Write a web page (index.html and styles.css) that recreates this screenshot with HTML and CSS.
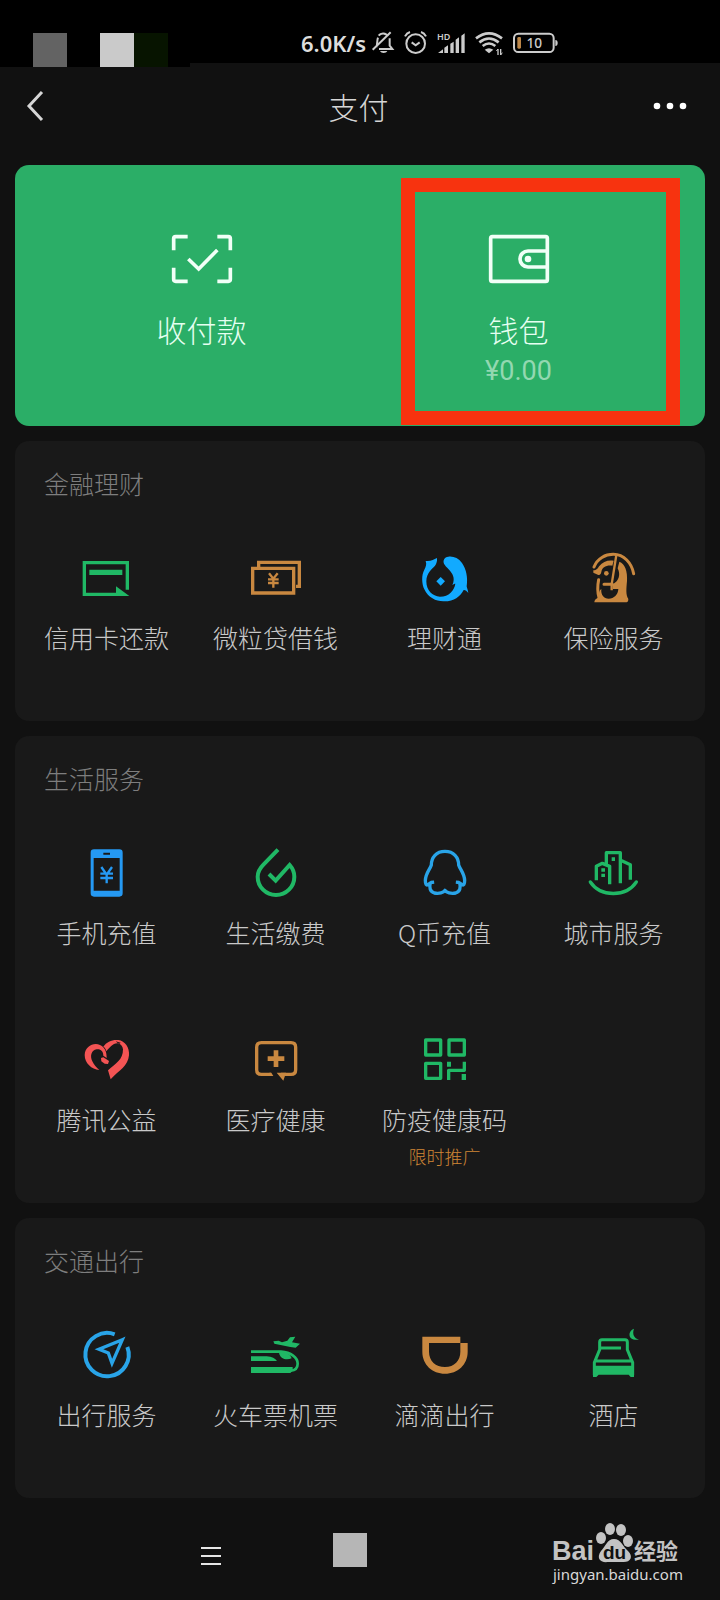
FILE: index.html
```html
<!DOCTYPE html>
<html lang="zh-CN">
<head>
<meta charset="utf-8">
<meta name="viewport" content="width=device-width, initial-scale=1">
<title>支付</title>
<link rel="stylesheet" href="styles.css">
</head>
<body>
<div class="status">
  <div class="mosaic"><i class="tile tile-gray"></i><i class="tile tile-light"></i><i class="tile tile-dark"></i></div>
  <span class="speed">6.0K/s</span>
  <div class="status-icons">
    <svg width="22" height="24" viewBox="0 0 66 72" fill="none" stroke="#ccc" stroke-width="6"><path d="M20 14C26 5 42 5 48 16M53 22V44L61 54H21M13 48C17 40 14 30 18 20M2 56L56 4"/><path d="M24 60H46C43 68 27 68 24 60Z" fill="#ccc" stroke="none"/></svg>
    <svg width="23" height="24" viewBox="0 0 69 72" fill="none" stroke="#ccc" stroke-width="6"><circle cx="35" cy="38" r="28"/><path d="M23 34L35 43L47 34M3 16Q8 6 18 3M51 3Q61 6 66 16"/></svg>
    <svg width="28" height="24" viewBox="0 0 84 72" fill="#ccc"><path d="M3 66L18 55V66ZM22 50L33 43V66H22ZM40 38L50 32V66H40ZM56 26L66 19V66H56ZM73 14L83 7V66H73Z"/><text class="hd" x="0" y="26">HD</text></svg>
    <svg width="28" height="24" viewBox="0 0 84 72" fill="none" stroke="#ccc" stroke-width="8"><path d="M3 22Q42 -8 81 22M13 34Q42 11 71 34M23 45Q42 30 61 45"/><path d="M42 67L29 56Q42 47 55 56Z" fill="#ccc" stroke="none"/><path d="M69 54V72M77 54V72" stroke-width="4"/><path d="M64 60L69 54M77 72L82 65" stroke-width="3"/></svg>
    <svg width="45" height="24" viewBox="0 0 135 72" fill="none"><rect x="3" y="8" width="119" height="55" rx="13" stroke="#ccc" stroke-width="6"/><rect x="13" y="18" width="11" height="35" rx="4" fill="#bc8648"/><path d="M127 27Q134 27 134 36T127 45Z" fill="#ccc"/><text class="level" x="64" y="51">10</text></svg>
  </div>
</div>

<header class="topbar">
  <button class="icon-btn" aria-label="返回"><svg width="18" height="32" viewBox="0 0 18 32" fill="none" stroke="#d6d6d6" stroke-width="3"><path d="M16 2L3 16L16 30"/></svg></button>
  <h1 class="title">支付</h1>
  <button class="icon-btn" aria-label="更多"><svg width="34" height="8" viewBox="0 0 34 8" fill="#fff"><circle cx="4" cy="4" r="3.300"/><circle cx="17" cy="4" r="3.300"/><circle cx="30" cy="4" r="3.300"/></svg></button>
</header>

<main class="content">
  <section class="pay">
    <button class="pay-item">
      <svg class="pay-icon" viewBox="0 0 180 144" fill="none" stroke="#f1fff7" stroke-width="11"><path d="M47 5H11Q5 5 5 11V46M136 5H169Q175 5 175 11V46M47 139H11Q5 139 5 133V98M136 139H169Q175 139 175 133V98M49 72L80 102L136 45"/></svg>
      <span class="pay-label">收付款</span>
    </button>
    <button class="pay-item">
      <svg class="pay-icon" viewBox="0 0 180 144" fill="none" stroke="#f1fff7" stroke-width="11"><rect x="5" y="5" width="170" height="134" rx="5"/><path d="M175 48H117A24 24 0 0 0 117 96H175"/><circle cx="117" cy="72" r="10" fill="#f1fff7" stroke="none"/></svg>
      <span class="pay-label">钱包</span>
      <span class="amount">¥0.00</span>
    </button>
    <div class="highlight"></div>
  </section>

  <section class="card">
    <h2 class="card-title">金融理财</h2>
    <div class="grid">
      <button class="item"><svg class="icon green" viewBox="0 0 153 153"><path class="line" stroke-width="10" d="M139 110V29H10V124H112"/><path d="M25 50H124V66H25ZM105 100L145 129H105Z"/></svg><span class="label">信用卡还款</span></button>
      <button class="item"><svg class="icon orange" viewBox="0 0 153 153"><path class="line" stroke-width="10" d="M8 46H131V120H8ZM26 42V28H148V100H138"/><path class="line" stroke-width="7" d="M57 61L70 77L83 61M70 77V104M54 79H86M54 90H86"/></svg><span class="label">微粒贷借钱</span></button>
      <button class="item"><svg class="icon azure" viewBox="0 0 153 153"><path d="M54 15C44 19 36 26 20 24C24 34 20 42 16 50C7 66 8 92 16 109C28 134 50 145 73 145C105 146 122 132 134 111C138 110 143 114 148 120C147 112 144 106 143 100C147 75 142 48 129 30C118 15 103 9 88 11C76 12 71 22 75 32C80 42 98 54 102 68C105 76 105 84 100 97C104 93 107 92 109 92C106 112 90 131 63 131C40 130 22 112 22 85C22 58 40 48 48 38C53 31 55 24 54 15Z"/><path d="M65 72L78 85L65 98L52 85Z"/></svg><span class="label">理财通</span></button>
      <button class="item"><svg class="icon orange" viewBox="0 0 153 153"><path class="line" stroke-width="9" stroke-linecap="round" d="M18 42C28 16 52 4 76 4C108 4 131 30 137 62M32 80C28 100 29 120 33 134M48 94H73"/><path class="line" stroke-width="7" d="M85 6L71 94V112"/><path d="M16 52C26 52 29 46 34 39C44 26 60 20 77 23L73 38C54 36 42 43 40 57C39 65 34 66 31 66L16 59Z"/><circle cx="55" cy="61" r="7"/><path d="M94 26C111 31 119 56 117 84C115 107 113 125 121 138C121 146 118 148 112 148H19C20 138 27 136 33 132C31 120 35 111 40 108C38 126 48 137 62 137C78 137 90 125 91 108H75L74 94C94 84 98 64 89 46Z"/></svg><span class="label">保险服务</span></button>
    </div>
  </section>

  <section class="card">
    <h2 class="card-title">生活服务</h2>
    <div class="grid">
      <button class="item"><svg class="icon blue" viewBox="0 0 153 153"><path fill-rule="evenodd" d="M39 4H115Q125 4 125 14V136Q125 146 115 146H39Q29 146 29 136V14Q29 4 39 4ZM38 30V128H116V30ZM67 14V20H87V14Z"/><path class="line" stroke-width="7" d="M61 57L77 80L93 57M77 80V106M58 77H96M58 90H96"/></svg><span class="label">手机充值</span></button>
      <button class="item"><svg class="icon green" viewBox="0 0 153 153"><path class="line" stroke-width="12" d="M84 5L41 49C31 59 23 71 23 86A55 55 0 0 0 133 86C133 73 127 60 119 51L77 98L57 78"/></svg><span class="label">生活缴费</span></button>
      <button class="item"><svg class="icon sky" viewBox="0 0 153 153"><path class="line" stroke-width="10" stroke-linejoin="round" d="M78 10C52 10 37 28 37 51C33 64 20 76 19 97C19 109 22 113 27 110L37 103M78 10C104 10 119 28 119 51C123 64 136 76 137 97C137 109 134 113 129 110L119 103M34 106C30 118 33 131 46 135C60 138 74 134 78 127C82 134 96 138 110 135C123 131 126 118 122 106M40 98L41 108M116 98L115 108"/></svg><span class="label">Q币充值</span></button>
      <button class="item"><svg class="icon green" viewBox="0 0 153 153"><path class="line" stroke-width="10" stroke-linejoin="round" d="M55 48V14H97V106M25 97V55L43 46L65 55V109M98 37L127 50V95"/><path class="line" stroke-width="10" stroke-linecap="round" d="M7 102C38 148 114 148 145 102"/><path d="M71 28H81V39H71ZM40 61H51V71H40ZM40 77H51V87H40Z"/></svg><span class="label">城市服务</span></button>
      <button class="item"><svg class="icon red" viewBox="0 0 153 153"><path d="M55 105C32 103 11 85 11 60C12 34 38 21 57 30C73 38 77 52 77 69L67 62C67 48 58 41 47 43C31 46 26 63 34 79C39 90 46 98 55 105Z"/><path d="M60 69L67 67L84 78L81 87L71 86L61 79Z"/><path fill-rule="evenodd" d="M67 35C77 20 94 13 112 15C132 18 146 37 144 61C141 94 115 105 89 133L81 106C105 84 126 75 126 43C125 33 119 26 109 25C94 26 86 38 76 49C75 43 72 38 67 35ZM104 19L114 28L119 23Z"/></svg><span class="label">腾讯公益</span></button>
      <button class="item"><svg class="icon orange" viewBox="0 0 153 153"><path class="line" stroke-width="10" d="M63 118H34Q20 118 20 104V37Q20 23 34 23H123Q137 23 137 37V104Q137 118 123 118H93"/><path d="M71 46H85V64H103V78H85V96H71V78H53V64H71ZM58 113H64L70 123H58ZM80 113H108L100 137Z"/></svg><span class="label">医疗健康</span></button>
      <button class="item"><svg class="icon green" viewBox="0 0 153 153"><path class="line" stroke-width="10" stroke-linejoin="round" d="M20 15H65V60H20ZM90 15H136V60H90ZM20 85H65V130H20ZM136 80V106H89V135"/><path d="M84 80H96V95H84ZM128 117H141V135H128Z"/></svg><span class="label">防疫健康码</span><span class="tag">限时推广</span></button>
    </div>
  </section>

  <section class="card">
    <h2 class="card-title">交通出行</h2>
    <div class="grid">
      <button class="item"><svg class="icon sky" viewBox="0 0 153 153"><path class="line" stroke-width="12" d="M101 13A65 65 0 1 0 139 51"/><path class="line" stroke-width="10" d="M124 29L54 58L82 69L93 100Z"/></svg><span class="label">出行服务</span></button>
      <button class="item"><svg class="icon green" viewBox="0 0 153 153"><path class="line" stroke-width="8" d="M3 65H93C123 67 143 83 143 101C143 115 134 121 122 122"/><path d="M3 79H50C66 80 76 86 81 93H3ZM3 111H128V122L121 129H3ZM87 68C105 64 121 72 125 85C110 91 91 88 87 68ZM70 34L86 32L96 37L112 32L120 22L136 20L126 37L150 41L137 53L121 51L73 41Z"/></svg><span class="label">火车票机票</span></button>
      <button class="item"><svg class="icon orange" viewBox="0 0 153 153"><path fill-rule="evenodd" d="M10 20H124V39H146V65C146 104 116 131 78 131C40 131 10 104 10 65ZM30 39V65C30 93 50 111 78 111C106 111 124 92 124 65V39Z"/></svg><span class="label">滴滴出行</span></button>
      <button class="item"><svg class="icon green" viewBox="0 0 153 153"><path class="line" stroke-width="9" d="M19 136V98L35 59V36Q35 29 42 29H111Q118 29 118 36V59L134 98V136M35 54H99M22 93H131"/><path d="M15 107H138V141H128L122 134H32L25 141H15ZM138 -4C119 2 117 34 153 29C138 25 132 12 138 -4Z"/></svg><span class="label">酒店</span></button>
    </div>
  </section>
</main>

<footer class="navbar">
  <button class="icon-btn" aria-label="菜单"><svg width="20" height="20" viewBox="0 0 20 20" stroke="#e6e6e6" stroke-width="2"><path d="M0 2H20M0 10H20M0 18H20"/></svg></button>
  <i class="tile tile-home"></i>
  <svg class="brand" width="128" height="62" viewBox="0 0 128 62" fill="#c3c3c3"><text class="brand-latin" x="-1" y="38">Bai</text><ellipse cx="48" cy="16" rx="5" ry="6"/><ellipse cx="57" cy="7" rx="5" ry="6"/><ellipse cx="68" cy="8" rx="5" ry="6"/><ellipse cx="75" cy="19" rx="5" ry="6"/><path d="M61 17C54 17 53 24 48 29C43 36 47 41 55 40H69C77 41 81 35 75 29C70 25 68 17 61 17Z"/><text class="brand-du" x="50" y="37">du</text><text class="brand-cjk" x="81" y="37">经验</text><text class="brand-url" x="0" y="58">jingyan.baidu.com</text></svg>
</footer>
</body>
</html>
```

FILE: styles.css
```css
* { box-sizing: border-box; }
body {
  margin: 0;
  background: #111;
  color: #c9c9c9;
  font-family: "Noto Sans CJK SC", sans-serif;
  font-weight: 300;
}
button {
  margin: 0;
  padding: 0;
  border: 0;
  background: none;
  color: inherit;
  font: inherit;
}
svg { display: block; overflow: visible; flex: none; }

.status {
  position: relative;
  display: flex;
  align-items: center;
  gap: 6px;
  height: 63px;
  padding: 22px 0 0 301px;
  background: #000;
}
.mosaic {
  position: absolute;
  left: 0;
  top: 33px;
  display: flex;
  width: 190px;
  height: 34px;
  padding-left: 33px;
  background: #000;
}
.tile { display: block; width: 34px; height: 34px; }
.tile-gray { background: #636363; margin-right: 33px; }
.tile-light { background: #cacaca; }
.tile-dark { background: #071400; }
.tile-home { background: #b6b6b6; }
.speed {
  color: #ddd;
  font-family: "Noto Sans", sans-serif;
  font-size: 22px;
  font-weight: 600;
  line-height: 30px;
}
.status-icons { display: flex; gap: 10px; }
.hd { font: 600 27px "Noto Sans", sans-serif; }
.level { font: 500 41px "Noto Sans", sans-serif; fill: #ccc; text-anchor: middle; }

.topbar {
  display: flex;
  align-items: center;
  justify-content: space-between;
  height: 102px;
  padding: 0 33px 16px 26px;
}
.icon-btn { display: flex; }
.title {
  margin: 0 0 0 20px;
  font-size: 30px;
  font-weight: 300;
  line-height: 40px;
  color: #d6d6d6;
}

.content {
  display: flex;
  flex-direction: column;
  gap: 15px;
  padding: 0 15px;
}
.pay {
  position: relative;
  display: grid;
  grid-template-columns: 1fr 1fr;
  min-height: 261px;
  padding: 70px 28px 32px;
  border-radius: 14px;
  background: #2bae67;
}
.pay-item {
  display: flex;
  flex-direction: column;
  align-items: center;
  color: #e6fff1;
}
.pay-icon { width: 60px; height: 48px; margin-bottom: 26px; }
.pay-label { font-size: 30px; line-height: 40px; }
.amount {
  font-family: Roboto, sans-serif;
  font-size: 27px;
  font-weight: 400;
  line-height: 44px;
  color: #93d8b1;
}
.highlight {
  position: absolute;
  top: 13px;
  right: 25px;
  bottom: 1px;
  left: 386px;
  border: 14px solid #f7330f;
  pointer-events: none;
}

.card { border-radius: 14px; background: #191919; }
.card-title {
  margin: 0;
  padding: 24px 29px 33px;
  color: #7e7e7e;
  font-size: 25px;
  font-weight: 300;
  line-height: 36px;
}
.grid {
  display: grid;
  grid-template-columns: repeat(4, 1fr);
  padding: 0 7px;
}
.item {
  display: flex;
  flex-direction: column;
  align-items: center;
  min-height: 187px;
  padding-top: 19px;
}
.icon { width: 51px; height: 51px; margin-bottom: 15px; fill: currentColor; }
.line { fill: none; stroke: currentColor; }
.green { color: #20b865; }
.orange { color: #c98840; }
.azure { color: #12aaff; }
.blue { color: #2599f3; }
.sky { color: #29a4e8; }
.red { color: #f45454; }
.label { font-size: 25px; line-height: 36px; white-space: nowrap; }
.tag { margin-top: 7px; color: #cf8535; font-size: 18px; line-height: 24px; }

.navbar {
  display: flex;
  align-items: flex-start;
  gap: 112px;
  height: 102px;
  padding: 24px 39px 0 201px;
}
.navbar .icon-btn { margin-top: 24px; }
.navbar .tile { margin-top: 11px; }
.brand { margin-left: auto; }
.brand-latin { font: 700 27px "Liberation Sans", sans-serif; }
.brand-du { font: 700 19px "Liberation Sans", sans-serif; fill: #111; }
.brand-cjk { font: 700 22px "Noto Sans CJK SC", sans-serif; }
.brand-url { font: 400 15px "Noto Sans", sans-serif; fill: #d8d8d8; }
```
